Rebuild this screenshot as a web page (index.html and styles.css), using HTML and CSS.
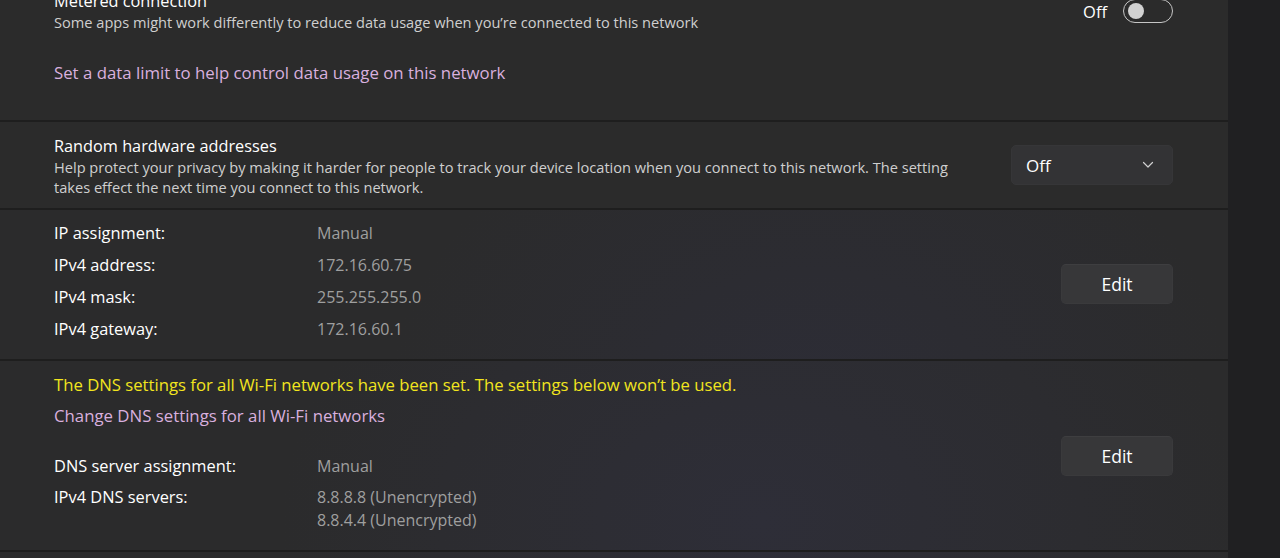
FILE: index.html
```html
<!DOCTYPE html>
<html lang="en">
<head>
<meta charset="utf-8">
<title>Wi-Fi properties</title>
<link rel="stylesheet" href="styles.css">
</head>
<body>
<div class="page">
  <main class="column">
    <section class="card card-metered">
      <div class="row">
        <div class="text">
          <div class="title">Metered connection</div>
          <div class="desc">Some apps might work differently to reduce data usage when you’re connected to this network</div>
        </div>
        <div class="toggle-wrap">
          <span class="toggle-label">Off</span>
          <span class="toggle"><span class="knob"></span></span>
        </div>
      </div>
      <a class="link link-data">Set a data limit to help control data usage on this network</a>
    </section>

    <section class="card card-random">
      <div class="row">
        <div class="text text-wide">
          <div class="title">Random hardware addresses</div>
          <div class="desc">Help protect your privacy by making it harder for people to track your device location when you connect to this network. The setting takes effect the next time you connect to this network.</div>
        </div>
        <div class="dropdown">
          <span>Off</span>
          <svg class="chevron" width="12" height="8" viewBox="0 0 12 8"><path d="M1.5 1.5 L6 6 L10.5 1.5" fill="none" stroke="#d0d0d0" stroke-width="1.2" stroke-linecap="round" stroke-linejoin="round"/></svg>
        </div>
      </div>
    </section>

    <section class="card card-ip">
      <div class="row">
        <dl class="props">
          <div class="prop"><dt>IP assignment:</dt><dd>Manual</dd></div>
          <div class="prop"><dt>IPv4 address:</dt><dd>172.16.60.75</dd></div>
          <div class="prop"><dt>IPv4 mask:</dt><dd>255.255.255.0</dd></div>
          <div class="prop"><dt>IPv4 gateway:</dt><dd>172.16.60.1</dd></div>
        </dl>
        <button class="btn">Edit</button>
      </div>
    </section>

    <section class="card card-dns">
      <div class="row">
        <div class="dns-body">
          <div class="warn">The DNS settings for all Wi-Fi networks have been set. The settings below won’t be used.</div>
          <a class="link link-dns">Change DNS settings for all Wi-Fi networks</a>
          <dl class="props props-dns">
            <div class="prop"><dt>DNS server assignment:</dt><dd>Manual</dd></div>
            <div class="prop"><dt>IPv4 DNS servers:</dt><dd><span class="line">8.8.8.8 (Unencrypted)</span><span class="line">8.8.4.4 (Unencrypted)</span></dd></div>
          </dl>
        </div>
        <button class="btn">Edit</button>
      </div>
    </section>

    <section class="card card-next"></section>
  </main>
  <aside class="strip"></aside>
</div>
</body>
</html>
```

FILE: styles.css
```css
* { box-sizing: border-box; }
html, body { margin: 0; padding: 0; height: 100%; overflow: hidden; }
body {
  background: #202020;
  font-family: "Open Sans", "Noto Sans", sans-serif;
  color: #ffffff;
}
.page {
  display: flex;
  height: 558px;
  overflow: hidden;
}
.column {
  width: 1228px;
  flex: none;
  display: flex;
  flex-direction: column;
  gap: 2px;
  margin-top: -23px;
  background: #1e1e1e;
}
.strip { flex: 1; background: #202022; }
.card {
  background: #2b2b2b;
  padding: 0 55px 0 54px;
  flex: none;
}
.card-ip {
  background:
    radial-gradient(ellipse 420px 300px at 66% 120%, rgba(46, 46, 62, 0.55), rgba(43, 43, 43, 0) 100%),
    #2b2b2c;
}
.card-dns, .card-next {
  background:
    radial-gradient(ellipse 480px 360px at 62% 85%, rgba(48, 48, 64, 0.6), rgba(43, 43, 43, 0) 100%),
    #2b2b2c;
}
.row {
  display: flex;
  align-items: center;
  justify-content: space-between;
}
.title { font-size: 16.3px; line-height: 22px; }
.desc { font-size: 14.6px; line-height: 20px; color: #cfcfcf; }
.text-wide { width: 910px; }

.card-metered { padding-top: 13px; padding-bottom: 36px; }
.link {
  display: block;
  color: #d9b0df;
  font-size: 16.8px;
  line-height: 22px;
  cursor: pointer;
}
.link-data { margin-top: 30px; }

.toggle-wrap { display: flex; align-items: center; gap: 16px; }
.toggle-label { font-size: 16.5px; }
.toggle {
  width: 50px;
  height: 24px;
  border: 1px solid #c6c6c6;
  border-radius: 12px;
  display: flex;
  align-items: center;
  padding-left: 4px;
}
.knob { width: 16px; height: 16px; border-radius: 50%; background: #d2d2d2; }

.card-random { padding-top: 13px; padding-bottom: 11px; }
.dropdown {
  width: 162px;
  height: 40px;
  margin-bottom: 2px;
  border-radius: 5px;
  background: #333335;
  border: 1px solid #363638;
  display: flex;
  align-items: center;
  justify-content: space-between;
  padding: 0 18px 0 14px;
  font-size: 17px;
}

.card-ip { padding-top: 12px; padding-bottom: 19px; }
.props { margin: 0; display: flex; flex-direction: column; gap: 10px; }
.prop { display: flex; font-size: 16.4px; line-height: 22px; }
.prop dt { width: 263px; color: #ffffff; }
.prop dd { margin: 0; color: #9f9f9f; display: flex; flex-direction: column; font-size: 16px; }
.prop .line { line-height: 24px; }
.prop .line:first-child { line-height: 22px; }

.btn {
  width: 112px;
  height: 40px;
  margin-top: 6px;
  border-radius: 5px;
  background: #373739;
  border: 1px solid #3a3a3c;
  border-top-color: #3e3e40;
  color: #ffffff;
  font-family: inherit;
  font-size: 17.5px;
}

.card-dns { padding-top: 13px; padding-bottom: 18px; }
.warn { color: #f2e51e; font-size: 16.7px; line-height: 22px; }
.link-dns { margin-top: 9px; }
.props-dns { margin-top: 28px; gap: 9px; }
.card-next { height: 20px; }
```
